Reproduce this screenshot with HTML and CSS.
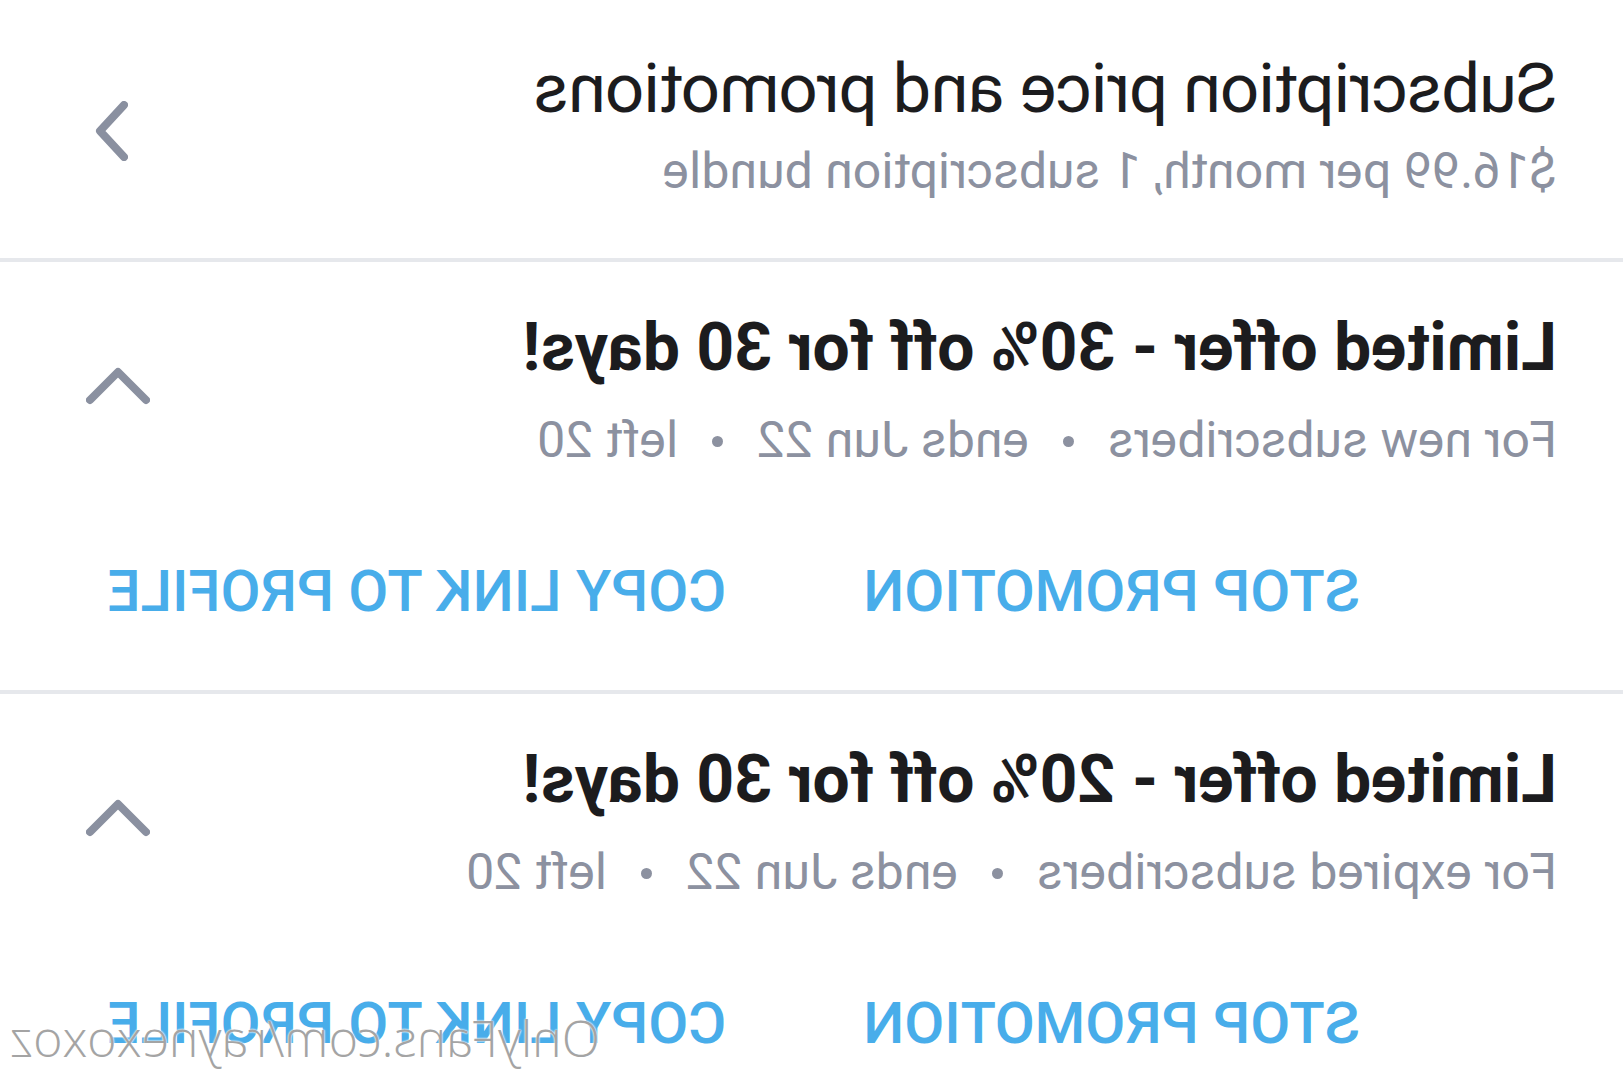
FILE: index.html
```html
<!DOCTYPE html>
<html lang="en">
<head>
    <meta charset="UTF-8">
    <meta name="viewport" content="width=device-width, initial-scale=1.0">
    <title>Subscription price and promotions</title>
    <link rel="stylesheet" href="styles.css">
</head>
<body>
    <div class="screen">
        <header class="head">
            <div class="head-text">
                <h1>Subscription price and promotions</h1>
                <p class="meta">$16.99 per month, 1 subscription bundle</p>
            </div>
            <svg class="back" viewBox="0 0 36 60" aria-hidden="true">
                <polyline points="4,4 28,30 4,56" />
            </svg>
        </header>

        <section class="offer">
            <div class="offer-top">
                <div class="offer-text">
                    <h2>Limited offer - 30% off for 30 days!</h2>
                    <p class="meta">For new subscribers<span class="dot"></span>ends Jun 22<span class="dot"></span>left 20</p>
                </div>
                <svg class="toggle" viewBox="0 0 64 38" aria-hidden="true">
                    <polyline points="4,33 32,5 60,33" />
                </svg>
            </div>
            <div class="offer-actions">
                <button class="text-btn">STOP PROMOTION</button>
                <button class="text-btn">COPY LINK TO PROFILE</button>
            </div>
        </section>

        <section class="offer">
            <div class="offer-top">
                <div class="offer-text">
                    <h2>Limited offer - 20% off for 30 days!</h2>
                    <p class="meta">For expired subscribers<span class="dot"></span>ends Jun 22<span class="dot"></span>left 20</p>
                </div>
                <svg class="toggle" viewBox="0 0 64 38" aria-hidden="true">
                    <polyline points="4,33 32,5 60,33" />
                </svg>
            </div>
            <div class="offer-actions">
                <button class="text-btn">STOP PROMOTION</button>
                <button class="text-btn">COPY LINK TO PROFILE</button>
            </div>
        </section>

        <div class="watermark">OnlyFans.com/raynexoxoz</div>
    </div>
</body>
</html>
```

FILE: styles.css
```css
:root {
    --text-dark: #1c1c1e;
    --text-muted: #8c91a0;
    --icon-gray: #8a90a0;
    --accent: #48adea;
    --divider: #e6e8ec;
}

* {
    box-sizing: border-box;
    margin: 0;
    padding: 0;
}

html, body {
    background: #fff;
    overflow: hidden;
}

body {
    font-family: Roboto, "Noto Sans", sans-serif;
    color: var(--text-dark);
}

/* the whole capture is mirrored left to right */
.screen {
    position: relative;
    width: 1623px;
    height: 1080px;
    overflow: hidden;
    transform: scaleX(-1);
}

.head {
    display: flex;
    align-items: center;
    justify-content: space-between;
    padding: 49px 92px 58px 66px;
    border-bottom: 4px solid var(--divider);
}

.head h1 {
    font-size: 69px;
    line-height: 80px;
    font-weight: 400;
    letter-spacing: -1px;
    white-space: nowrap;
}

.head .meta {
    margin-top: 13px;
}

.meta {
    font-size: 50px;
    line-height: 58px;
    color: var(--text-muted);
    white-space: nowrap;
}

.dot {
    display: inline-block;
    width: 11px;
    height: 11px;
    border-radius: 50%;
    background: currentColor;
    margin: 0 34px;
    vertical-align: 10px;
}

.back {
    width: 36px;
    height: 60px;
    margin-top: 13px;
    fill: none;
    stroke: var(--icon-gray);
    stroke-width: 8;
    stroke-linecap: round;
    stroke-linejoin: round;
}

.offer {
    padding: 47px 88px 64px 66px;
    border-bottom: 4px solid var(--divider);
}

.offer-top {
    display: flex;
    align-items: center;
    justify-content: space-between;
}

.offer h2 {
    font-size: 66px;
    line-height: 78px;
    font-weight: 700;
    white-space: nowrap;
}

.offer .meta {
    margin-top: 24px;
}

.toggle {
    width: 64px;
    height: 38px;
    margin: 0 -2px 6px 0;
    fill: none;
    stroke: var(--icon-gray);
    stroke-width: 8;
    stroke-linecap: round;
    stroke-linejoin: round;
}

.offer-actions {
    display: flex;
    justify-content: flex-end;
    gap: 137px;
    margin-top: 87px;
    padding-right: 20px;
}

.text-btn {
    background: none;
    border: none;
    padding: 0;
    font-family: inherit;
    font-size: 58px;
    line-height: 70px;
    font-weight: 500;
    color: var(--accent);
    cursor: pointer;
}

.watermark {
    position: absolute;
    right: 10px;
    bottom: 8px;
    font-family: "Open Sans", sans-serif;
    font-size: 50px;
    font-weight: 300;
    color: #a4a4a4;
    text-shadow: 0 0 2px #fff, 0 0 2px #fff;
    white-space: nowrap;
}
```
